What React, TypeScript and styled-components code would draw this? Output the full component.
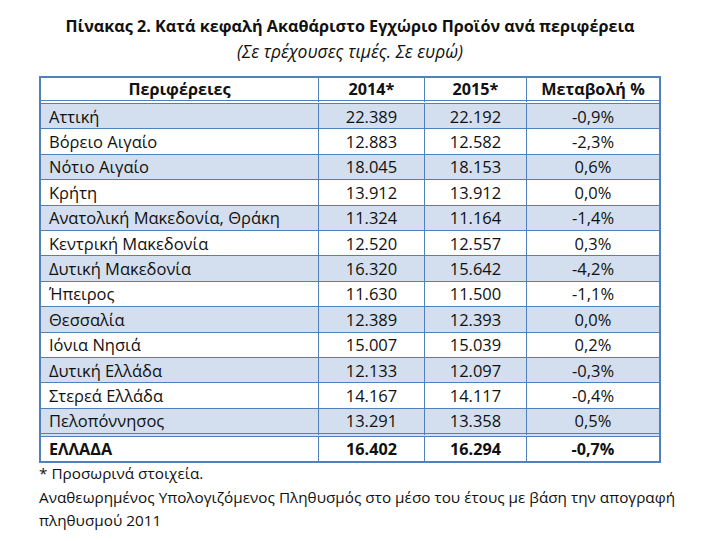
import * as React from "react";
import styled, { createGlobalStyle } from "styled-components";

const GlobalStyle = createGlobalStyle`
    html, body {
        margin: 0;
        padding: 0;
        background: #ffffff;
    }
    body {
        font-family: "Open Sans", "Noto Sans", "DejaVu Sans", sans-serif;
        color: #111111;
    }
`;

const BLUE = "#4f81bd";
const SHADE = "#d3dfee";

const Page = styled.div`
    width: 622px;
    padding: 13px 0 0 39px;
`;

const Title = styled.h1`
    margin: 0;
    font-size: 16.2px;
    font-weight: 700;
    line-height: 26px;
    text-align: center;
`;

const Subtitle = styled.div`
    font-size: 17.5px;
    font-style: italic;
    line-height: 25px;
    text-align: center;
    margin-bottom: 12px;
`;

const Table = styled.table`
    width: 622px;
    table-layout: fixed;
    border-collapse: separate;
    border-spacing: 0;
    border: 2px solid ${BLUE};
    font-size: 16.5px;
`;

const HeadCell = styled.th`
    height: 22px;
    padding: 0;
    font-size: 16.2px;
    font-weight: 700;
    text-align: center;
    border-right: 1px solid ${BLUE};
    border-bottom: 4px double ${BLUE};
    &:last-child {
        border-right: none;
    }
`;

const Row = styled.tr<{ $shaded?: boolean; $total?: boolean }>`
    background: ${p => (p.$shaded ? SHADE : "#ffffff")};
    font-weight: ${p => (p.$total ? 700 : 400)};
`;

const Cell = styled.td<{ $name?: boolean; $last?: boolean }>`
    height: 24.4px;
    padding: 0 0 0 ${p => (p.$name ? "8px" : "0")};
    text-align: ${p => (p.$name ? "left" : "center")};
    border-right: 1px solid ${BLUE};
    border-bottom: ${p => (p.$last ? `4px double ${BLUE}` : `1px solid ${BLUE}`)};
    white-space: nowrap;
    &:last-child {
        border-right: none;
    }
`;

const TotalCell = styled(Cell)`
    height: 24px;
    font-size: 16.2px;
    border-bottom: none;
`;

const Notes = styled.div`
    font-size: 15.3px;
    line-height: 23.5px;
    margin-top: -1px;
    white-space: nowrap;
`;

const rows: [string, string, string, string][] = [
    ["Αττική", "22.389", "22.192", "-0,9%"],
    ["Βόρειο Αιγαίο", "12.883", "12.582", "-2,3%"],
    ["Νότιο Αιγαίο", "18.045", "18.153", "0,6%"],
    ["Κρήτη", "13.912", "13.912", "0,0%"],
    ["Ανατολική Μακεδονία, Θράκη", "11.324", "11.164", "-1,4%"],
    ["Κεντρική Μακεδονία", "12.520", "12.557", "0,3%"],
    ["Δυτική Μακεδονία", "16.320", "15.642", "-4,2%"],
    ["Ήπειρος", "11.630", "11.500", "-1,1%"],
    ["Θεσσαλία", "12.389", "12.393", "0,0%"],
    ["Ιόνια Νησιά", "15.007", "15.039", "0,2%"],
    ["Δυτική Ελλάδα", "12.133", "12.097", "-0,3%"],
    ["Στερεά Ελλάδα", "14.167", "14.117", "-0,4%"],
    ["Πελοπόννησος", "13.291", "13.358", "0,5%"],
];

export default function App() {
    return (
        <Page>
            <GlobalStyle />
            <Title>Πίνακας 2. Κατά κεφαλή Ακαθάριστο Εγχώριο Προϊόν ανά περιφέρεια</Title>
            <Subtitle>(Σε τρέχουσες τιμές. Σε ευρώ)</Subtitle>
            <Table>
                <colgroup>
                    <col style={{ width: 278 }} />
                    <col style={{ width: 106 }} />
                    <col style={{ width: 102 }} />
                    <col />
                </colgroup>
                <thead>
                    <tr>
                        <HeadCell>Περιφέρειες</HeadCell>
                        <HeadCell>2014*</HeadCell>
                        <HeadCell>2015*</HeadCell>
                        <HeadCell>Μεταβολή %</HeadCell>
                    </tr>
                </thead>
                <tbody>
                    {rows.map(([name, a, b, c], i) => {
                        const last = i === rows.length - 1;
                        return (
                            <Row key={name} $shaded={i % 2 === 0}>
                                <Cell $name $last={last}>{name}</Cell>
                                <Cell $last={last}>{a}</Cell>
                                <Cell $last={last}>{b}</Cell>
                                <Cell $last={last}>{c}</Cell>
                            </Row>
                        );
                    })}
                    <Row $total>
                        <TotalCell $name>ΕΛΛΑΔΑ</TotalCell>
                        <TotalCell>16.402</TotalCell>
                        <TotalCell>16.294</TotalCell>
                        <TotalCell>-0,7%</TotalCell>
                    </Row>
                </tbody>
            </Table>
            <Notes>
                <div>* Προσωρινά στοιχεία.</div>
                <div>Αναθεωρημένος Υπολογιζόμενος Πληθυσμός στο μέσο του έτους με βάση την απογραφή</div>
                <div>πληθυσμού 2011</div>
            </Notes>
        </Page>
    );
}
